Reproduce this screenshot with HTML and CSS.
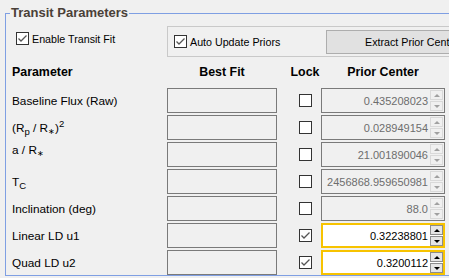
FILE: index.html
```html
<!DOCTYPE html>
<html lang="en">

<head>
  <meta charset="UTF-8" />
  <title>Transit Parameters</title>
  <link rel="stylesheet" href="styles.css">
</head>

<body>
  <fieldset class="group">
    <legend>Transit Parameters</legend>

    <div class="top-row">
      <label class="check enable">
        <span class="box"><svg viewBox="0 0 11 11"><path d="M1.5 5.5 L4 8 L9.5 2.5" /></svg></span>
        Enable Transit Fit
      </label>
      <div class="prior-frame">
        <label class="check auto">
          <span class="box"><svg viewBox="0 0 11 11"><path d="M1.5 5.5 L4 8 L9.5 2.5" /></svg></span>
          Auto Update Priors
        </label>
        <button class="btn">Extract Prior Center</button>
      </div>
    </div>

    <div class="grid">
      <div class="hd">Parameter</div>
      <div class="hd c">Best Fit</div>
      <div class="hd c lock">Lock</div>
      <div class="hd c">Prior Center</div>

      <!-- baseline -->
      <div class="name">Baseline Flux (Raw)</div>
      <div class="fit"></div>
      <div class="lock"><span class="box"></span></div>
      <div class="spin"><span class="val">0.435208023</span><span class="arrows"><i class="up"></i><i class="dn"></i></span></div>

      <!-- radius ratio -->
      <div class="name">(R<sub>p</sub> / R<sub class="star">∗</sub>)<sup>2</sup></div>
      <div class="fit"></div>
      <div class="lock"><span class="box"></span></div>
      <div class="spin"><span class="val">0.028949154</span><span class="arrows"><i class="up"></i><i class="dn"></i></span></div>

      <!-- scaled axis -->
      <div class="name raise">a / R<sub class="star">∗</sub></div>
      <div class="fit"></div>
      <div class="lock"><span class="box"></span></div>
      <div class="spin"><span class="val">21.001890046</span><span class="arrows"><i class="up"></i><i class="dn"></i></span></div>

      <!-- mid transit -->
      <div class="name">T<sub>C</sub></div>
      <div class="fit"></div>
      <div class="lock"><span class="box"></span></div>
      <div class="spin"><span class="val">2456868.959650981</span><span class="arrows"><i class="up"></i><i class="dn"></i></span></div>

      <div class="name">Inclination (deg)</div>
      <div class="fit"></div>
      <div class="lock"><span class="box"></span></div>
      <div class="spin"><span class="val">88.0</span><span class="arrows"><i class="up"></i><i class="dn"></i></span></div>

      <!-- limb darkening, free -->
      <div class="name">Linear LD u1</div>
      <div class="fit"></div>
      <div class="lock"><span class="box"><svg viewBox="0 0 11 11"><path d="M1.5 5.5 L4 8 L9.5 2.5" /></svg></span></div>
      <div class="spin free"><span class="val">0.32238801</span><span class="arrows"><i class="up"></i><i class="dn"></i></span></div>

      <div class="name">Quad LD u2</div>
      <div class="fit"></div>
      <div class="lock"><span class="box"><svg viewBox="0 0 11 11"><path d="M1.5 5.5 L4 8 L9.5 2.5" /></svg></span></div>
      <div class="spin free"><span class="val">0.3200112</span><span class="arrows"><i class="up"></i><i class="dn"></i></span></div>
    </div>
  </fieldset>
</body>

</html>
```

FILE: styles.css
```css
body {
  background: #f0f0f0;
  color: #000;
  font-family: 'Liberation Sans', Arial, sans-serif;
  font-size: 11.8px;
  margin: 0;
  overflow: hidden;
}

.group {
  width: 520px;
  margin: 5px 0 0 5px;
  padding: 0 0 0 6px;
  border: 1px solid #7f9fe3;
  min-width: 0;
}

.group legend {
  font-size: 13px;
  font-weight: bold;
  line-height: 16px;
  color: #4a4038;
  padding: 0 1px;
  margin-left: -2px;
}

.top-row {
  display: flex;
  align-items: flex-start;
  margin-top: 5px;
}

.check {
  display: flex;
  align-items: center;
  gap: 3px;
  white-space: nowrap;
  font-size: 10.7px;
}

.enable {
  width: 151px;
  margin: 6px 0 0 4px;
}

.box {
  display: inline-block;
  width: 13px;
  height: 13px;
  box-sizing: border-box;
  border: 1px solid #333;
  background: #fff;
}

.box svg {
  display: block;
  width: 11px;
  height: 11px;
  fill: none;
  stroke: #555;
  stroke-width: 1.3;
}

.prior-frame {
  flex: 1;
  display: flex;
  align-items: center;
  height: 31px;
  box-sizing: border-box;
  border: 1px solid #c9c9c9;
  padding: 0 6px;
}

.auto {
  width: 152px;
}

.btn {
  width: 172px;
  height: 24px;
  background: #e1e1e1;
  border: 1px solid #adadad;
  font-family: inherit;
  font-size: 10.7px;
  color: #000;
  padding: 0;
}

.grid {
  display: grid;
  grid-template-columns: 155px 110px 44px 124px;
  grid-template-rows: 29px repeat(7, 25px);
  row-gap: 2px;
  align-items: center;
}

.hd {
  font-weight: bold;
  font-size: 12.4px;
}

.c {
  text-align: center;
}

.lock {
  padding-left: 12px;
  display: flex;
  justify-content: center;
}

.name sub,
.name sup {
  font-size: 9.5px;
  line-height: 0;
}

.name sub.star {
  font-size: 8px;
  vertical-align: -2px;
}

.name.raise {
  align-self: start;
  padding-top: 1px;
}

.fit {
  height: 25px;
  box-sizing: border-box;
  border: 1px solid #7a7a7a;
  background: #f0f0f0;
}

.spin {
  height: 25px;
  box-sizing: border-box;
  border: 1px solid #7a7a7a;
  background: #f0f0f0;
  display: flex;
  align-items: stretch;
}

.spin .val {
  flex: 1;
  text-align: right;
  align-self: center;
  font-size: 11px;
  color: #6d6d6d;
  padding-right: 2px;
}

.arrows {
  width: 13px;
  margin: 1px 1px 1px 0;
  display: flex;
  flex-direction: column;
}

.arrows i {
  flex: 1;
  border: 1px solid #d9d9d9;
  background: #f0f0f0;
  display: flex;
  align-items: center;
  justify-content: center;
}

.arrows i + i {
  margin-top: 1px;
}

.arrows i::after {
  content: '';
  border-left: 3px solid transparent;
  border-right: 3px solid transparent;
}

.arrows .up::after {
  border-bottom: 3px solid #a0a0a0;
}

.arrows .dn::after {
  border-top: 3px solid #a0a0a0;
}

.spin.free {
  border: 2px solid #f7c300;
  background: #fff;
}

.spin.free .val {
  color: #000;
}

.spin.free .arrows {
  margin: 0;
}

.spin.free .arrows i {
  border-color: #8c8c8c;
  background: #e5e5e5;
}

.spin.free .up::after {
  border-bottom-color: #000;
}

.spin.free .dn::after {
  border-top-color: #000;
}
```
